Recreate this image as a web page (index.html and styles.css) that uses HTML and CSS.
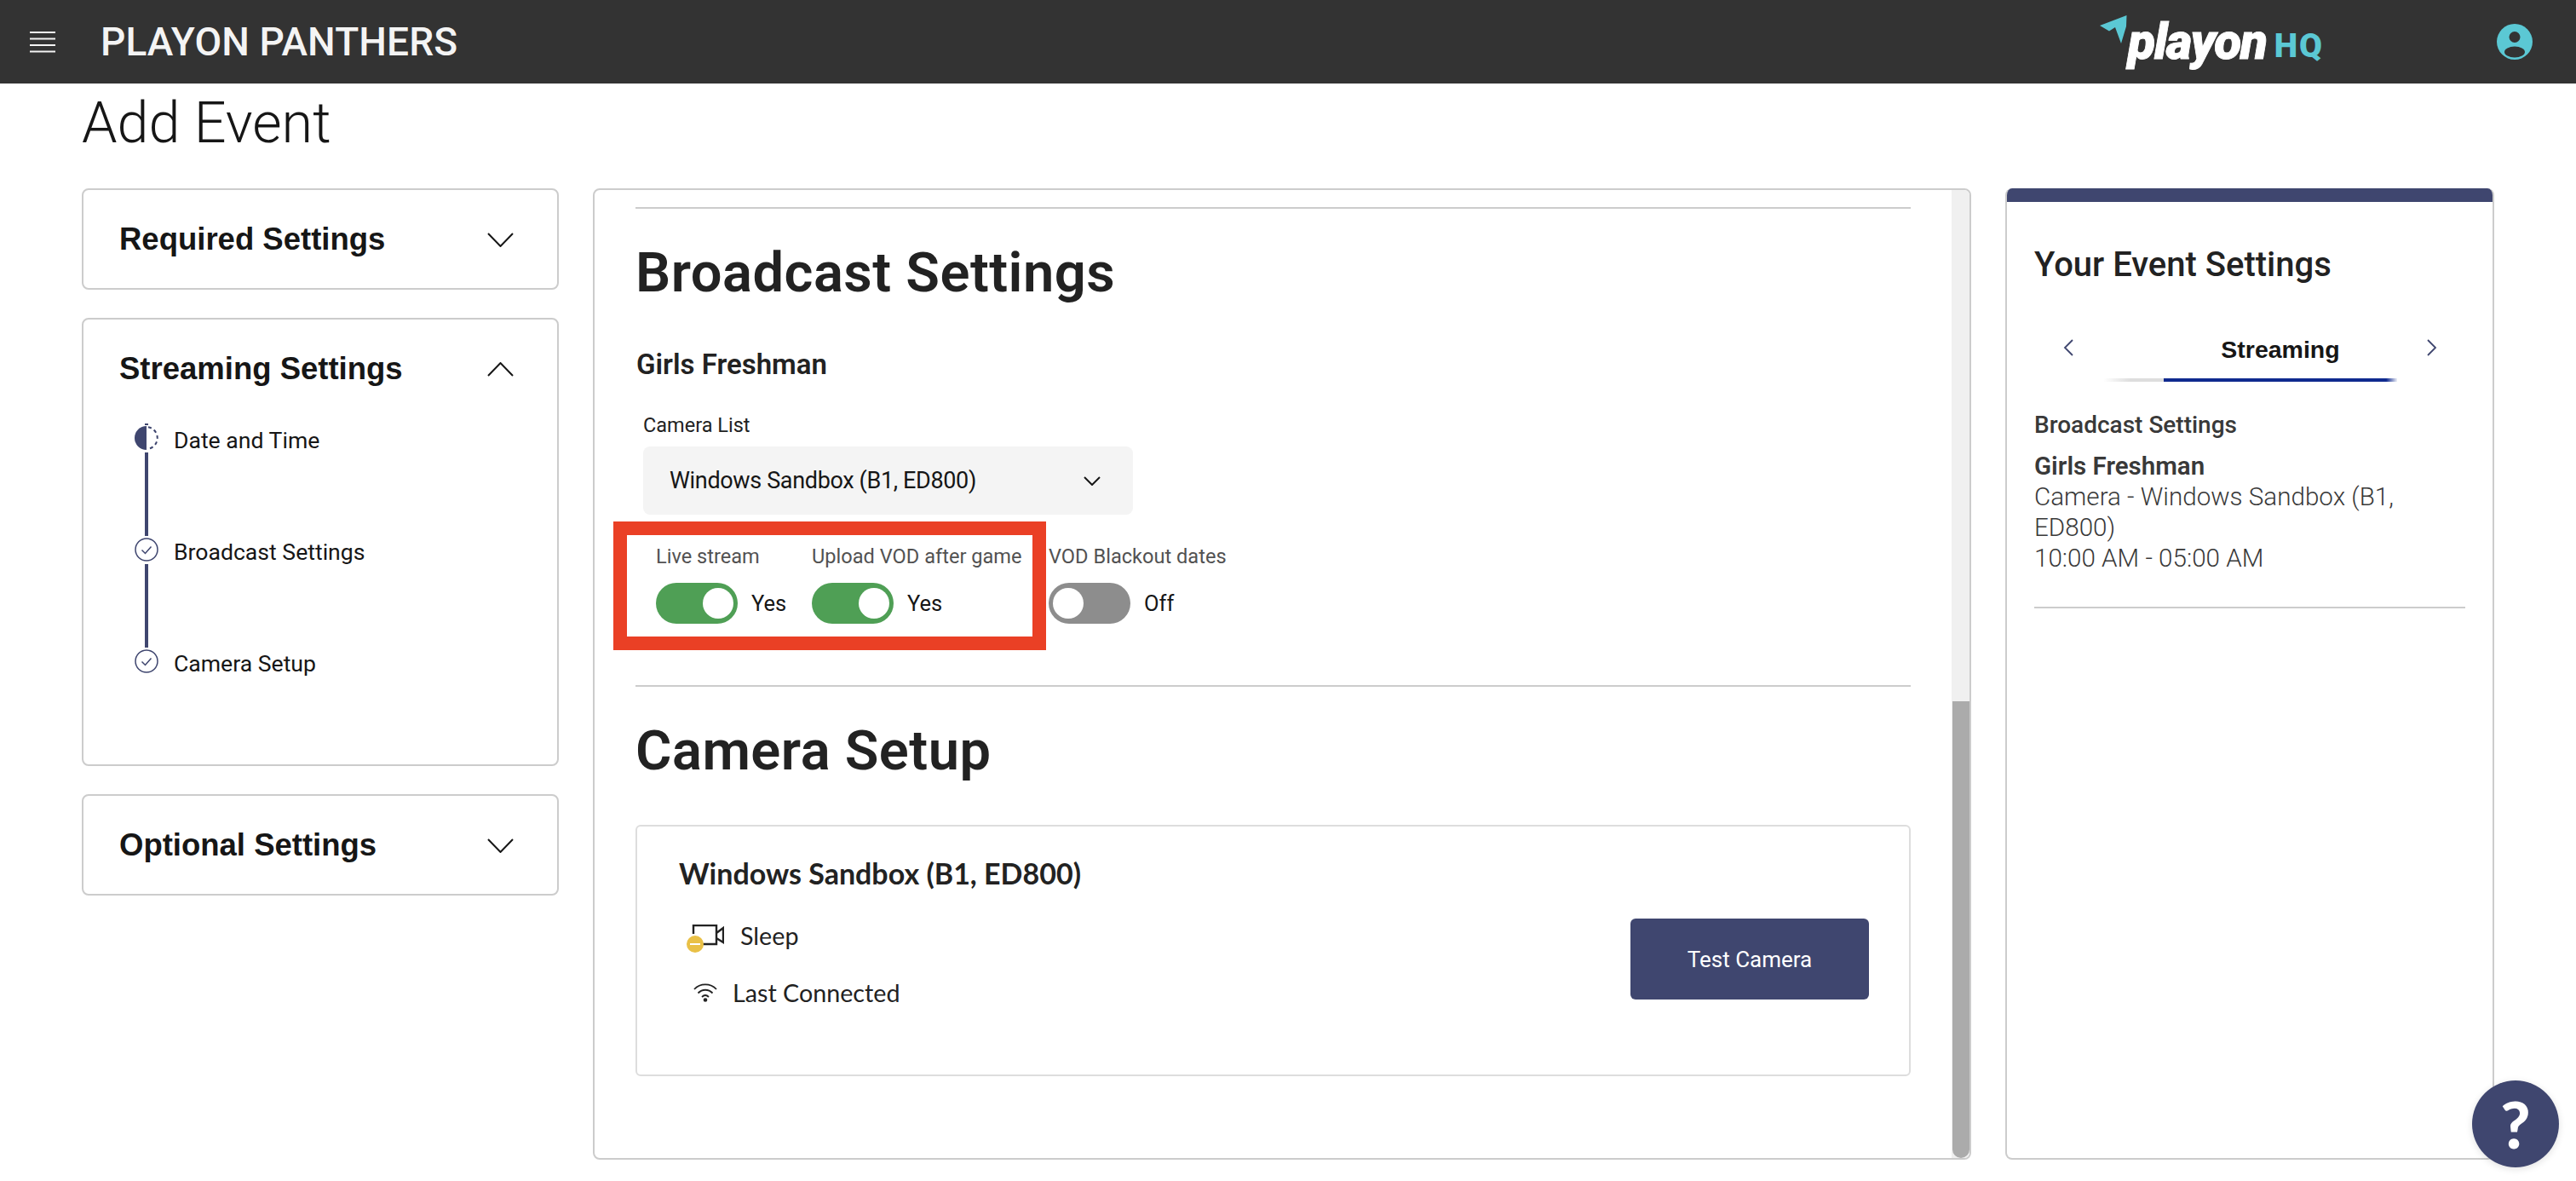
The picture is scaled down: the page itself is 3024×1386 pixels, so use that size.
FILE: index.html
```html
<!DOCTYPE html>
<html lang="en">
<head>
<meta charset="utf-8">
<title>Add Event</title>
<link rel="stylesheet" href="styles.css">
</head>
<body>
<header class="topbar">
  <svg class="burger" width="30" height="26" viewBox="0 0 30 26"><path d="M0 2h30M0 9.500h30M0 17h30M0 24.500h30" stroke="#f4f4f4" stroke-width="2"/></svg>
  <div class="org">PLAYON PANTHERS</div>
  <div class="brand">
    <svg class="brand-arrow" width="32" height="34" viewBox="0 0 32 34"><path d="M31.500 0 0 12l11 6.500 7-4.500 7 19 6-20z" fill="#5bc8d4"/></svg>
    <span class="brand-name">playon</span>
    <span class="brand-hq">HQ</span>
  </div>
  <svg class="avatar" width="42" height="42" viewBox="0 0 42 42"><circle cx="21" cy="21" r="21" fill="#5bc8d4"/><circle cx="21" cy="15.500" r="6.500" fill="#333"/><ellipse cx="21" cy="33" rx="12" ry="6.500" fill="#333"/></svg>
</header>
<h1 class="page-title">Add Event</h1>
<main class="layout">
  <aside class="steps-col">
    <section class="acc acc-closed">
      <div class="acc-head"><span class="acc-title">Required Settings</span>
        <svg width="31" height="17" viewBox="0 0 31 17"><path d="M1 1l14.500 15L30 1" fill="none" stroke="#161616" stroke-width="2"/></svg></div>
    </section>
    <section class="acc acc-open">
      <div class="acc-head"><span class="acc-title">Streaming Settings</span>
        <svg width="31" height="17" viewBox="0 0 31 17"><path d="M1 16L15.500 1 30 16" fill="none" stroke="#161616" stroke-width="2"/></svg></div>
      <ol class="steps">
        <li class="step">
          <div class="step-rail">
            <svg class="step-partial" width="28" height="28" viewBox="0 0 28 28"><path d="M12 -3h4v2h-4z" fill="#3f466f"/><path d="M14 0a14 14 0 0 0 0 28z" fill="#3f466f"/><path d="M16 1.200a13 13 0 0 1 0 25.600" fill="none" stroke="#3f466f" stroke-width="2" stroke-dasharray="4 3.500"/></svg>
            <div class="step-line"></div>
          </div>
          <span class="step-text">Date and Time</span>
        </li>
        <li class="step">
          <div class="step-rail">
            <svg width="28" height="28" viewBox="0 0 28 28"><circle cx="14" cy="14" r="13" fill="none" stroke="#3f466f" stroke-width="1.500"/><path d="M8.500 14.500l4 4 7-8" fill="none" stroke="#3f466f" stroke-width="1.500"/></svg>
            <div class="step-line"></div>
          </div>
          <span class="step-text">Broadcast Settings</span>
        </li>
        <li class="step">
          <div class="step-rail">
            <svg width="28" height="28" viewBox="0 0 28 28"><circle cx="14" cy="14" r="13" fill="none" stroke="#3f466f" stroke-width="1.500"/><path d="M8.500 14.500l4 4 7-8" fill="none" stroke="#3f466f" stroke-width="1.500"/></svg>
          </div>
          <span class="step-text">Camera Setup</span>
        </li>
      </ol>
    </section>
    <section class="acc acc-closed">
      <div class="acc-head"><span class="acc-title">Optional Settings</span>
        <svg width="31" height="17" viewBox="0 0 31 17"><path d="M1 1l14.500 15L30 1" fill="none" stroke="#161616" stroke-width="2"/></svg></div>
    </section>
  </aside>

  <section class="editor">
    <div class="editor-body">
      <hr class="rule">
      <h2 class="section-title">Broadcast Settings</h2>
      <h3 class="team">Girls Freshman</h3>
      <label class="field-label">Camera List</label>
      <div class="select"><span>Windows Sandbox (B1, ED800)</span>
        <svg width="20" height="11" viewBox="0 0 20 11"><path d="M1 1l9 9 9-9" fill="none" stroke="#161616" stroke-width="2"/></svg></div>
      <div class="toggles">
        <div class="mark"></div>
        <div class="tfield"><div class="tlabel">Live stream</div><div class="tctrl"><span class="switch on"><i></i></span><span class="tvalue">Yes</span></div></div>
        <div class="tfield"><div class="tlabel">Upload VOD after game</div><div class="tctrl"><span class="switch on"><i></i></span><span class="tvalue">Yes</span></div></div>
        <div class="tfield"><div class="tlabel">VOD Blackout dates</div><div class="tctrl"><span class="switch"><i></i></span><span class="tvalue">Off</span></div></div>
      </div>
      <hr class="rule rule-2">
      <h2 class="section-title">Camera Setup</h2>
      <div class="camera">
        <div class="camera-name">Windows Sandbox (B1, ED800)</div>
        <div class="camera-row">
          <div class="camera-status">
            <div class="status status-sleep">
              <svg width="44" height="33" viewBox="0 0 44 33"><path d="M8 11V1h27v22H15M35 10l8-6v17l-8-5" fill="none" stroke="#222" stroke-width="2.400"/><circle cx="10" cy="23" r="10" fill="#e9c046"/><path d="M4 23h12" stroke="#fff" stroke-width="2"/></svg>
              <span>Sleep</span>
            </div>
            <div class="status status-wifi">
              <svg width="28" height="22" viewBox="0 0 28 22"><path d="M1 7c7-7.500 19-7.500 26 0M5.500 11.500c5-5 12-5 17 0M10 16c2.500-2.500 5.500-2.500 8 0" fill="none" stroke="#222" stroke-width="1.800"/><circle cx="14" cy="19.500" r="2.300" fill="#222"/></svg>
              <span>Last Connected</span>
            </div>
          </div>
          <button class="test-btn">Test Camera</button>
        </div>
      </div>
    </div>
    <div class="scroll-track"><div class="scroll-thumb"></div></div>
  </section>

  <aside class="summary">
    <div class="summary-bar"></div>
    <div class="summary-body">
      <h2 class="summary-title">Your Event Settings</h2>
      <div class="tabs">
        <svg class="tab-arrow" width="12" height="20" viewBox="0 0 12 20"><path d="M11 1L2 10l9 9" fill="none" stroke="#3f466f" stroke-width="1.800"/></svg>
        <div class="tab-track">
          <div class="tab tab-prev"></div>
          <div class="tab tab-active">Streaming</div>
        </div>
        <svg class="tab-arrow" width="12" height="20" viewBox="0 0 12 20"><path d="M1 1l9 9-9 9" fill="none" stroke="#3f466f" stroke-width="1.800"/></svg>
      </div>
      <div class="sum-head">Broadcast Settings</div>
      <div class="sum-team">Girls Freshman</div>
      <div class="sum-text">Camera - Windows Sandbox (B1, ED800)</div>
      <div class="sum-text">10:00 AM - 05:00 AM</div>
      <hr class="rule sum-rule">
    </div>
  </aside>
</main>
<div class="help">?</div>
</body>
</html>
```
FILE: styles.css
```css
* { box-sizing: border-box; }
html, body { margin: 0; padding: 0; }
body {
  width: 3024px; height: 1386px; overflow: hidden; position: relative;
  background: #fff; color: #161616;
  font-family: Roboto, "Noto Sans", sans-serif;
}
.topbar {
  height: 98px; background: #333; display: flex; align-items: center;
  padding: 0 51px 0 35px;
}
.burger { flex: none; }
.org { margin-left: 53px; font-size: 46px; font-weight: 500; color: #f4f4f4; line-height: 50px; letter-spacing: .1px; }
.brand { margin-left: auto; margin-right: 203px; display: flex; align-items: flex-start; height: 60px; margin-top: -2px; }
.brand-arrow { flex: none; }
.brand-name {
  font-size: 59px; font-weight: 900; font-style: italic; color: #fff; line-height: 60px;
  letter-spacing: -1.500px; margin-left: 1px; margin-top: 1px; -webkit-text-stroke: .8px #fff;
}
.brand-hq { font-size: 39px; font-weight: 900; color: #5bc8d4; line-height: 44px; letter-spacing: 2px; margin-left: 9px; margin-top: 14px; }
.page-title {
  margin: 0 0 33px 96px; height: 90px; font-size: 66.500px; line-height: 92px; font-weight: 300; color: #161616;
}
.layout {
  display: grid; grid-template-columns: 560px 1618px 574px; column-gap: 40px;
  margin: 0 96px; height: 1140px;
}
.steps-col { display: flex; flex-direction: column; gap: 33px; }
.acc { border: 2px solid #ccc; border-radius: 8px; background: #fff; }
.acc-closed { height: 119px; }
.acc-open { height: 526px; }
.acc-head {
  height: 116px; display: flex; align-items: center; justify-content: space-between;
  padding: 0 51px 0 42px;
}
.acc-title { font-family: "Liberation Sans", Arial, sans-serif; font-weight: 700; font-size: 36.500px; color: #161616; }
.steps { list-style: none; margin: 9px 0 0 60px; padding: 0; }
.step { display: flex; gap: 18px; }
.step-rail { width: 28px; display: flex; flex-direction: column; align-items: center; }
.step-rail svg { display: block; }
.step-partial { overflow: visible; }
.step-line { width: 4px; height: 98px; margin: 3px 0 2px; background: #3f466f; }
.step-text { font-size: 26.600px; line-height: 34px; color: #161616; }

.editor {
  border: 2px solid #ccc; border-radius: 8px; display: flex; overflow: hidden; background: #fff;
}
.editor-body { flex: 1; min-width: 0; padding: 20px 48px 0 48px; }
.rule { margin: 0; border: 0; height: 2px; background: #ccc; }
.rule-2 { margin-top: 72px; }
.section-title { margin: 35px 0 0; font-size: 65px; line-height: 80px; font-weight: 600; color: #222; padding-left: 0; letter-spacing: .5px; }
.team { margin: 48px 0 0; font-size: 33px; line-height: 40px; font-weight: 600; color: #222; padding-left: 1px; }
.field-label { display: block; margin: 35px 0 0 9px; font-size: 23.500px; line-height: 32px; color: #222; }
.select {
  width: 575px; height: 80px; margin: 9px 0 0 9px; padding: 0 38px 0 31px;
  background: #f4f4f4; border-radius: 8px; display: flex; align-items: center; justify-content: space-between;
  font-size: 27px; letter-spacing: -.35px; color: #161616;
}
.toggles {
  position: relative; margin: 33px 0 0 24px; display: grid; grid-template-columns: 183px 278px auto;
}
.mark {
  position: absolute; left: -50px; top: -25px; width: 508px; height: 151px; border: 16px solid #ea4025;
}
.tlabel { font-size: 23.600px; line-height: 32px; color: #525252; white-space: nowrap; }
.tctrl { display: flex; align-items: center; gap: 16px; margin-top: 15px; }
.switch { display: flex; justify-content: flex-start; width: 96px; height: 48px; padding: 6px 5px; border-radius: 24px; background: #8d8d8d; }
.switch.on { background: #4f9f55; justify-content: flex-end; }
.switch i { display: block; width: 36px; height: 36px; border-radius: 50%; background: #fff; }
.tvalue { font-size: 25.500px; line-height: 48px; color: #161616; }

.camera {
  margin-top: 47px; height: 295px; border: 2px solid #ddd; border-radius: 6px; padding: 35px 47px 0 49px;
  font-family: Lato, sans-serif; color: #222;
}
.camera-name { font-size: 34px; line-height: 40px; font-weight: 700; }
.camera-row { display: flex; justify-content: space-between; align-items: flex-start; margin-top: 33px; }
.camera-status { display: flex; flex-direction: column; gap: 29px; padding-top: 2px; margin-left: 9px; }
.status { display: flex; align-items: flex-start; gap: 19px; font-size: 28.700px; line-height: 36px; }
.status-sleep svg { margin-top: 5px; }
.status-wifi { margin-left: 8px; gap: 18px; }
.status-wifi svg { margin-top: 7px; }
.test-btn {
  width: 280px; height: 95px; border: 0; border-radius: 6px; background: #3f466f; color: #fff;
  font-family: Roboto, sans-serif; font-size: 26px;
}
.scroll-track { flex: none; width: 21px; background: #f0f0f0; display: flex; flex-direction: column; justify-content: flex-end; }
.scroll-thumb { height: 536px; margin-left: 1px; background: #ababab; border-radius: 0 0 10px 10px; }

.summary { border: 2px solid #ccc; border-top: 0; border-radius: 8px; overflow: hidden; background: #fff; display: flex; flex-direction: column; }
.summary-bar { height: 16px; margin: 0 -2px; background: #3f466f; flex: none; }
.summary-body { padding: 0 32px; }
.summary-title { margin: 48px 0 0; font-size: 40px; line-height: 52px; font-weight: 500; color: #222; }
.tabs { display: flex; margin-top: 53px; align-items: flex-start; }
.tab-arrow { flex: none; margin-top: 8px; }
.tab-arrow:first-child { margin-left: 34px; margin-right: 36px; }
.tab-arrow:last-child { margin-left: 35px; }
.tab-track { display: flex; width: 344px; height: 58px; }
.tab { padding-bottom: 14px; height: 58px; border-bottom: 4px solid transparent; }
.tab-prev { width: 70px; border-image: linear-gradient(90deg, #fff, #ddd 45%, #ddd) 1; }
.tab-active {
  width: 274px; text-align: center; font-family: "Liberation Sans", sans-serif; font-weight: 700; font-size: 28.500px; line-height: 40px;
  border-image: linear-gradient(90deg, #0f2a8f 95%, #fff) 1; color: #161616;
}
.sum-head { margin-top: 33px; font-size: 28px; line-height: 36px; font-weight: 500; color: #393939; }
.sum-team { margin-top: 12px; font-size: 29.500px; line-height: 36px; font-weight: 600; color: #393939; }
.sum-text { font-size: 29.600px; line-height: 36px; color: #393939; font-weight: 300; }
.sum-rule { margin-top: 39px; }
.help {
  position: absolute; right: 20px; bottom: 16px; width: 102px; height: 102px; border-radius: 50%;
  background: #3f466f; color: #fff; text-align: center; font-family: Lato, sans-serif; font-weight: 900; font-size: 76px; line-height: 102px;
  box-shadow: 0 2px 8px rgba(0,0,0,.12);
}
```
